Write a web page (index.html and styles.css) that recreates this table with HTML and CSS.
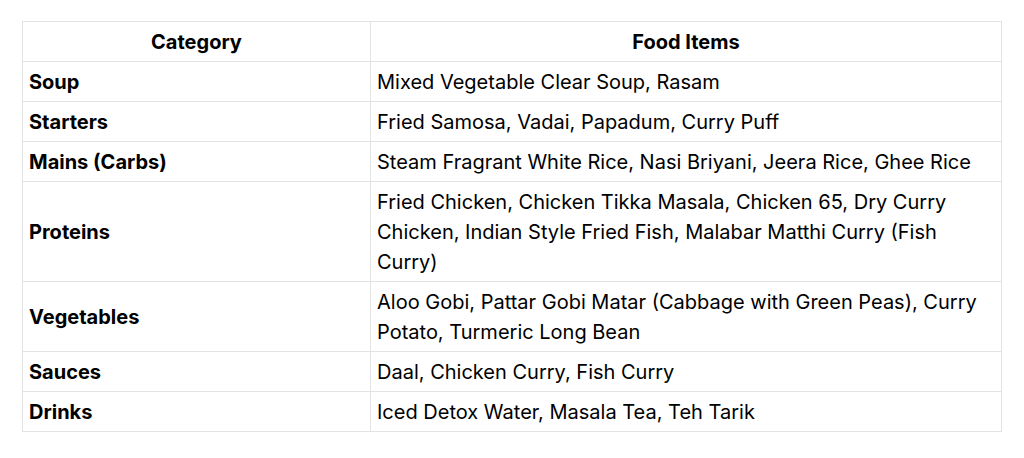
FILE: index.html
```html
<!DOCTYPE html>
<html lang="en">
<head>
  <meta charset="UTF-8">
  <title>Menu Categories</title>
  <link rel="stylesheet" href="styles.css">
</head>
<body>
  <div class="menu-wrap">
    <table class="menu-table">
      <colgroup>
        <col class="col-category">
        <col class="col-items">
      </colgroup>
      <thead>
        <tr>
          <th>Category</th>
          <th>Food Items</th>
        </tr>
      </thead>
      <tbody>
        <tr>
          <td class="cat">Soup</td>
          <td>Mixed Vegetable Clear Soup, Rasam</td>
        </tr>
        <tr>
          <td class="cat">Starters</td>
          <td>Fried Samosa, Vadai, Papadum, Curry Puff</td>
        </tr>
        <tr>
          <td class="cat">Mains (Carbs)</td>
          <td>Steam Fragrant White Rice, Nasi Briyani, Jeera Rice, Ghee Rice</td>
        </tr>
        <tr>
          <td class="cat">Proteins</td>
          <td>Fried Chicken, Chicken Tikka Masala, Chicken 65, Dry Curry Chicken, Indian Style Fried Fish, Malabar Matthi Curry (Fish Curry)</td>
        </tr>
        <tr>
          <td class="cat">Vegetables</td>
          <td>Aloo Gobi, Pattar Gobi Matar (Cabbage with Green Peas), Curry Potato, Turmeric Long Bean</td>
        </tr>
        <tr>
          <td class="cat">Sauces</td>
          <td>Daal, Chicken Curry, Fish Curry</td>
        </tr>
        <tr>
          <td class="cat">Drinks</td>
          <td>Iced Detox Water, Masala Tea, Teh Tarik</td>
        </tr>
      </tbody>
    </table>
  </div>
</body>
</html>
```

FILE: styles.css
```css
body {
  margin: 0;
  background: #ffffff;
  font-family: Inter, "Noto Sans", sans-serif;
  color: #000000;
}

.menu-wrap {
  padding: 21px 22px;
}

.menu-table {
  width: 980px;
  border-collapse: collapse;
  table-layout: fixed;
  font-size: 20px;
  line-height: 30px;
}

.col-category {
  width: 348px;
}

.menu-table th,
.menu-table td {
  border: 1px solid #e3e3e3;
  padding: 5px 6px 4px;
  vertical-align: middle;
  text-align: left;
}

.menu-table th {
  text-align: center;
  font-weight: 700;
}

.menu-table td.cat {
  font-weight: 700;
}
```
